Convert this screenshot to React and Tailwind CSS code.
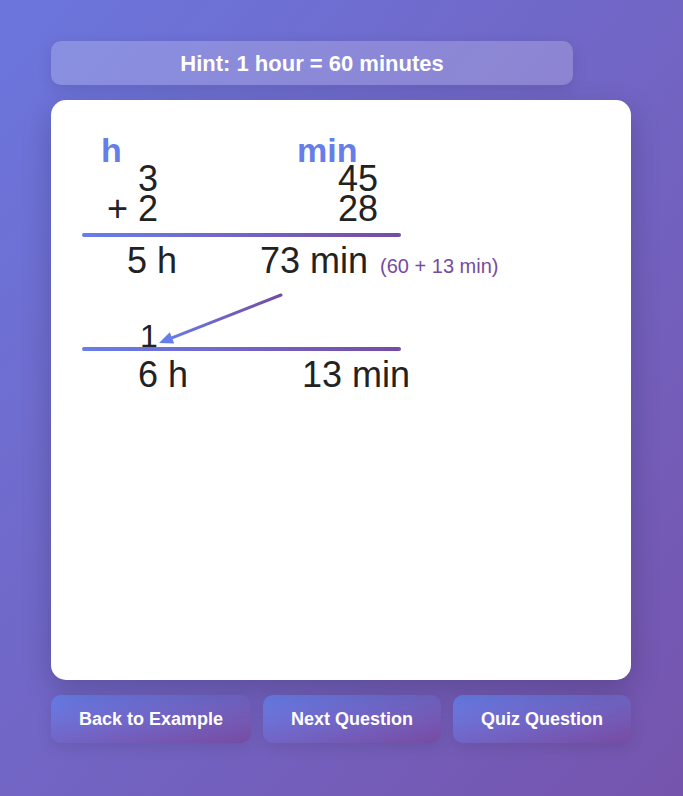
import React from 'react';

const steps = ['Back to Example', 'Next Question', 'Quiz Question'];
const btnWidths = ['w-[200px]', 'w-[178px]', 'w-[178px]'];

const CarryArrow = () => (
  <svg className="absolute left-0 top-0 pointer-events-none" width="580" height="580" viewBox="0 0 580 580">
    <defs>
      <linearGradient id="arrowGrad" gradientUnits="userSpaceOnUse" x1="230" y1="195" x2="108" y2="243">
        <stop offset="0" stopColor="#764ba2" />
        <stop offset="1" stopColor="#667eea" />
      </linearGradient>
    </defs>
    <line x1="230" y1="195" x2="119" y2="238.6" stroke="url(#arrowGrad)" strokeWidth="3" strokeLinecap="round" />
    <polygon points="108,243 123.2,243.5 118.8,232.3" fill="#667eea" />
  </svg>
);

const Rule = ({ className }) => (
  <div className={`w-[319px] h-[4px] rounded-full bg-gradient-to-r from-[#667eea] to-[#764ba2] ${className}`} />
);

export default function App() {
  return (
    <div className="min-h-screen bg-gradient-to-br from-[#6b76dd] to-[#7554ad] font-['Liberation_Sans',Arial,sans-serif]">
      <div className="w-[580px] ml-[51px] pt-[41px] pb-[53px]">
        {/* hint */}
        <div className="w-[522px] h-[44px] rounded-[10px] bg-white/20 shadow-[0_4px_15px_rgba(0,0,0,0.1)] flex items-center justify-center text-white font-bold text-[22px]">
          Hint: 1 hour = 60 minutes
        </div>

        {/* work area */}
        <div className="relative mt-[15px] h-[580px] bg-white rounded-[15px] shadow-[0_10px_30px_rgba(0,0,0,0.2)] pl-[31px] pt-[36px] text-[#222]">
          <CarryArrow />

          <div className="flex text-[34px] leading-[28px] font-bold text-[#667eea]">
            <span className="w-[215px] pl-[19px]">h</span>
            <span>min</span>
          </div>

          <div className="flex text-[36px] leading-[30px]">
            <span className="w-[76px] text-right">3</span>
            <span className="w-[220px] text-right">45</span>
          </div>
          <div className="flex text-[36px] leading-[30px]">
            <span className="w-[76px] text-right">+ 2</span>
            <span className="w-[220px] text-right">28</span>
          </div>

          <Rule className="mt-[9px]" />

          <div className="flex items-baseline mt-[4px] text-[36px] leading-[40px]">
            <span className="w-[178px] pl-[45px]">5 h</span>
            <span>73 min</span>
            <span className="ml-[12px] text-[20px] leading-[20px] text-[#764ba2]">(60 + 13 min)</span>
          </div>

          <div className="mt-[43px] pl-[58px] text-[32px] leading-[24px]">1</div>
          <Rule className="-mt-[1px]" />

          <div className="flex mt-[4px] text-[36px] leading-[40px]">
            <span className="w-[220px] pl-[56px]">6 h</span>
            <span>13 min</span>
          </div>
        </div>

        {/* actions */}
        <div className="flex gap-[12px] mt-[15px]">
          {steps.map((label, i) => (
            <button
              key={label}
              className={`${btnWidths[i]} h-[48px] rounded-[10px] bg-gradient-to-br from-[#667eea] to-[#764ba2] shadow-[0_4px_15px_rgba(0,0,0,0.1)] text-white font-bold text-[18px]`}
            >
              {label}
            </button>
          ))}
        </div>
      </div>
    </div>
  );
}
